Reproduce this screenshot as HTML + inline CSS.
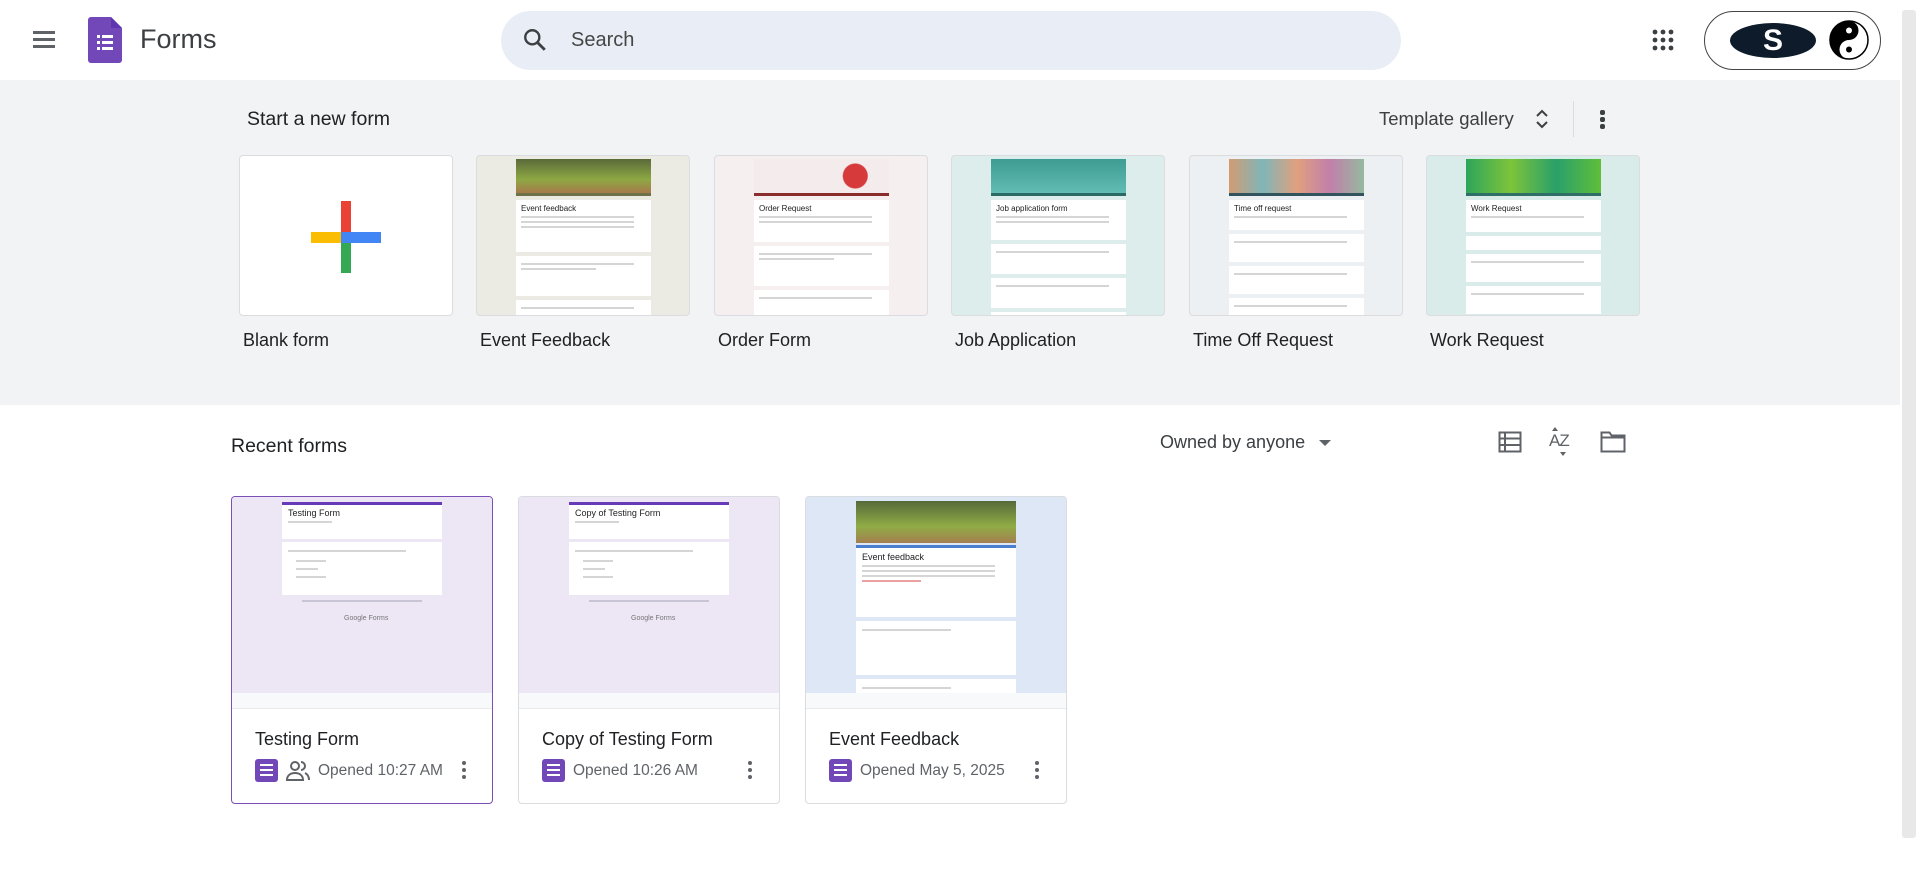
<!DOCTYPE html>
<html><head><meta charset="utf-8"><style>
*{margin:0;padding:0;box-sizing:border-box}
body{width:1920px;height:869px;overflow:hidden;background:#fff;font-family:"Liberation Sans",Arial,sans-serif;color:#202124;position:relative}
.a{position:absolute}
.grey{left:0;top:80px;width:1900px;height:325px;background:#f1f3f4}
.tc{position:absolute;top:155px;width:214px;height:161px;border:1px solid #dadce0;border-radius:4px;overflow:hidden}
.tc .col{position:absolute;left:39px;width:135px;top:3px;bottom:0}
.tc .img{height:34px}
.tc .bar{height:3px}
.tc .p{background:#fff;margin-top:4px;padding:4px 5px}
.tc .p:first-of-type{margin-top:0}
.ln{height:2px;background:#d5d5d5;margin:3px 0;width:90%}
.tl{position:absolute;top:330px;font-size:18px;color:#202124}
.rc{position:absolute;top:496px;width:262px;height:308px;border:1px solid #dadce0;border-radius:4px;overflow:hidden;background:#fff}
.rc .pv{position:absolute;left:0;top:0;right:0;height:196px}
.rc .ft{position:absolute;left:0;right:0;top:196px;height:16px;background:#f8f9fa;border-bottom:1px solid #e8eaed}
.rc .t{position:absolute;left:23px;top:232px;font-size:18px}
.rc .m{position:absolute;left:23px;top:262px;font-size:15.5px;color:#5f6368;display:flex;align-items:center;gap:8px}
.fi{width:23px;height:23px;background:#7248b9;border-radius:3px;position:relative}
.fi i{position:absolute;left:5px;width:13px;height:2px;background:#fff}
.keb{position:absolute;width:4px;height:4px;border-radius:2px;background:#5f6368}
.pan{position:absolute;left:50px;width:160px;background:#fff}
</style></head><body>

<!-- header -->
<div class="a" style="left:33px;top:31px;width:22px;height:2.5px;background:#5f6368;box-shadow:0 7px 0 #5f6368,0 14px 0 #5f6368"></div>
<svg class="a" style="left:88px;top:17px" width="34" height="46" viewBox="0 0 34 46"><path d="M3 0H23L34 11V43a3 3 0 0 1-3 3H3a3 3 0 0 1-3-3V3a3 3 0 0 1 3-3z" fill="#7248b9"/><path d="M23 0V11H34z" fill="#5e35b1"/><g fill="#fff"><rect x="9" y="18" width="3" height="3"/><rect x="14" y="18" width="11" height="3"/><rect x="9" y="24" width="3" height="3"/><rect x="14" y="24" width="11" height="3"/><rect x="9" y="30" width="3" height="3"/><rect x="14" y="30" width="11" height="3"/></g></svg>
<div class="a" style="left:140px;top:24px;font-size:27px;color:#3c4043">Forms</div>
<div class="a" style="left:501px;top:11px;width:900px;height:59px;border-radius:30px;background:#e9eef6"></div>
<svg class="a" style="left:522px;top:27px" width="26" height="26" viewBox="0 0 24 24"><circle cx="9.5" cy="9.5" r="6.5" fill="none" stroke="#3c4043" stroke-width="2.2"/><path d="M14.5 14.5L21 21" stroke="#3c4043" stroke-width="2.6"/></svg>
<div class="a" style="left:571px;top:29px;font-size:20px;color:#444746">Search</div>
<svg class="a" style="left:1652px;top:29px" width="22" height="22" viewBox="0 0 22 22" fill="#3c4043"><circle cx="3" cy="3" r="2.4"/><circle cx="11" cy="3" r="2.4"/><circle cx="19" cy="3" r="2.4"/><circle cx="3" cy="11" r="2.4"/><circle cx="11" cy="11" r="2.4"/><circle cx="19" cy="11" r="2.4"/><circle cx="3" cy="19" r="2.4"/><circle cx="11" cy="19" r="2.4"/><circle cx="19" cy="19" r="2.4"/></svg>
<div class="a" style="left:1704px;top:11px;width:177px;height:59px;border:1.5px solid #444;border-radius:30px;background:#fff"></div>
<div class="a" style="left:1730px;top:23px;width:86px;height:35px;border-radius:50%;background:#0d1b2a;color:#fff;font-weight:bold;font-size:30px;text-align:center;line-height:35px;font-family:'Liberation Sans',sans-serif">S</div>
<svg class="a" style="left:1829px;top:20px" width="40" height="40" viewBox="0 0 40 40"><circle cx="20" cy="20" r="19" fill="#fff" stroke="#000" stroke-width="1.5"/><path d="M20 1a19 19 0 0 0 0 38a9.5 9.5 0 0 1 0-19a9.5 9.5 0 0 0 0-19z" fill="#000"/><circle cx="20" cy="10.5" r="3" fill="#fff"/><circle cx="20" cy="29.5" r="3" fill="#000"/></svg>

<!-- grey template section -->
<div class="a grey"></div>
<div class="a" style="left:1902px;top:10px;width:14px;height:828px;background:#e8e8e8;border-radius:3px"></div>
<div class="a" style="left:247px;top:108px;font-size:19.5px;color:#202124">Start a new form</div>
<div class="a" style="left:1379px;top:108px;font-size:18.5px;color:#3c4043">Template gallery</div>
<svg class="a" style="left:1533px;top:106px" width="18" height="26" viewBox="0 0 18 26"><path d="M4 10l5-5 5 5M4 16l5 5 5-5" fill="none" stroke="#3c4043" stroke-width="2"/></svg>
<div class="a" style="left:1573px;top:101px;width:1px;height:36px;background:#dadce0"></div>
<div class="keb" style="left:1600px;top:110px;width:5px;height:5px;background:#3c4043"></div>
<div class="keb" style="left:1600px;top:117px;width:5px;height:5px;background:#3c4043"></div>
<div class="keb" style="left:1600px;top:124px;width:5px;height:5px;background:#3c4043"></div>

<div class="tc" style="left:239px;background:#fff">
<div class="a" style="left:101px;top:45px;width:10px;height:31px;background:#ea4335"></div>
<div class="a" style="left:71px;top:76px;width:30px;height:11px;background:#fbbc04"></div>
<div class="a" style="left:101px;top:76px;width:40px;height:11px;background:#4285f4"></div>
<div class="a" style="left:101px;top:87px;width:10px;height:30px;background:#34a853"></div>
</div>
<div class="tl" style="left:243px">Blank form</div>

<div class="tc" style="left:476px;background:#ecebe3"><div class="col"><div class="img" style="background:linear-gradient(180deg,#5b6a3a,#8da843 60%,#a77a4b)"></div><div class="bar" style="background:#6d7248"></div><div class="p" style="height:52px"><div style="font-size:8px">Event feedback</div><div class="ln"></div><div class="ln"></div><div class="ln"></div></div><div class="p" style="height:40px"><div class="ln"></div><div class="ln" style="width:60%"></div></div><div class="p" style="height:30px"><div class="ln"></div></div></div></div>
<div class="tl" style="left:480px">Event Feedback</div>

<div class="tc" style="left:714px;background:#f6efef"><div class="col"><div class="img" style="background:radial-gradient(circle at 75% 50%,#d63a3a 0 12px,transparent 13px),#f4ecec"></div><div class="bar" style="background:#8b2d2d"></div><div class="p" style="height:42px"><div style="font-size:8px">Order Request</div><div class="ln"></div><div class="ln"></div></div><div class="p" style="height:40px"><div class="ln"></div><div class="ln" style="width:60%"></div></div><div class="p" style="height:30px"><div class="ln"></div></div></div></div>
<div class="tl" style="left:718px">Order Form</div>

<div class="tc" style="left:951px;background:#dcedeb"><div class="col"><div class="img" style="background:linear-gradient(180deg,#3d9c93,#62bcb3)"></div><div class="bar" style="background:#2a6b66"></div><div class="p" style="height:40px"><div style="font-size:8px">Job application form</div><div class="ln"></div><div class="ln"></div></div><div class="p" style="height:30px"><div class="ln"></div></div><div class="p" style="height:30px"><div class="ln"></div></div><div class="p" style="height:20px"></div></div></div>
<div class="tl" style="left:955px">Job Application</div>

<div class="tc" style="left:1189px;background:#edf0f2"><div class="col"><div class="img" style="background:linear-gradient(90deg,#d39b73,#7fb6b8,#e0a07e,#c27faa,#95b9a0)"></div><div class="bar" style="background:#31545e"></div><div class="p" style="height:30px"><div style="font-size:8px">Time off request</div><div class="ln"></div></div><div class="p" style="height:28px"><div class="ln"></div></div><div class="p" style="height:28px"><div class="ln"></div></div><div class="p" style="height:28px"><div class="ln"></div></div></div></div>
<div class="tl" style="left:1193px">Time Off Request</div>

<div class="tc" style="left:1426px;background:#d9ecea"><div class="col"><div class="img" style="background:linear-gradient(90deg,#2da55a,#7dc43a,#2aa06a,#5fbf3a)"></div><div class="bar" style="background:#2f6f68"></div><div class="p" style="height:32px"><div style="font-size:8px">Work Request</div><div class="ln"></div></div><div class="p" style="height:14px"></div><div class="p" style="height:28px"><div class="ln"></div></div><div class="p" style="height:28px"><div class="ln"></div></div></div></div>
<div class="tl" style="left:1430px">Work Request</div>

<!-- recent -->
<div class="a" style="left:231px;top:435px;font-size:19.5px">Recent forms</div>
<div class="a" style="left:1160px;top:432px;font-size:18px;color:#3c4043">Owned by anyone</div>
<div class="a" style="left:1319px;top:440px;border-left:6px solid transparent;border-right:6px solid transparent;border-top:6px solid #5f6368"></div>
<svg class="a" style="left:1498px;top:431px" width="24" height="22" viewBox="0 0 24 22"><rect x="1.5" y="1.5" width="21" height="19" fill="none" stroke="#5f6368" stroke-width="2"/><path d="M1.5 7.5h21M1.5 14h21M7 1.5v19" stroke="#5f6368" stroke-width="2"/></svg>
<div class="a" style="left:1549px;top:431px;font-size:17px;color:#5f6368;letter-spacing:-1px">AZ</div>
<div class="a" style="left:1552px;top:427px;border-left:3px solid transparent;border-right:3px solid transparent;border-bottom:4px solid #5f6368"></div>
<div class="a" style="left:1560px;top:452px;border-left:3px solid transparent;border-right:3px solid transparent;border-top:4px solid #5f6368"></div>
<svg class="a" style="left:1600px;top:431px" width="26" height="22" viewBox="0 0 26 22"><path d="M1.5 20.5V1.5h8l2 3h13v16z" fill="none" stroke="#5f6368" stroke-width="2"/><path d="M1.5 6.5h23" stroke="#5f6368" stroke-width="2"/></svg>

<!-- card 1 -->
<div class="rc" style="left:231px;border:1.5px solid #7b4fb5">
<div class="pv" style="background:#ece6f5"><div class="pan" style="top:5px;height:37px;border-top:3px solid #673ab7;padding:3px 6px;font-size:9px">Testing Form<div class="ln" style="width:30%"></div></div><div class="pan" style="top:45px;height:53px;padding:5px 6px"><div class="ln" style="width:80%"></div><div class="ln" style="width:20%;margin-left:8px;margin-top:8px"></div><div class="ln" style="width:15%;margin-left:8px;margin-top:6px"></div><div class="ln" style="width:20%;margin-left:8px;margin-top:6px"></div></div><div class="a" style="left:70px;top:103px;width:120px;height:2px;background:#c9c3d6"></div><div class="a" style="left:112px;top:118px;font-size:7px;color:#777">Google Forms</div></div><div class="ft"></div>
<div class="t">Testing Form</div>
<div class="m"><div class="fi"><i style="top:5px"></i><i style="top:10px"></i><i style="top:15px"></i></div><svg width="24" height="22" viewBox="0 0 24 22"><circle cx="9" cy="6" r="4" fill="none" stroke="#5f6368" stroke-width="2"/><path d="M1 20c0-5 4-7 8-7s8 2 8 7z" fill="none" stroke="#5f6368" stroke-width="2"/><path d="M15 2a4 4 0 0 1 0 8M19 13c2 1 4 3 4 7" fill="none" stroke="#5f6368" stroke-width="2"/></svg><span>Opened 10:27 AM</span></div>
<div class="keb" style="left:230px;top:264px"></div><div class="keb" style="left:230px;top:271px"></div><div class="keb" style="left:230px;top:278px"></div>
</div>

<!-- card 2 -->
<div class="rc" style="left:518px">
<div class="pv" style="background:#ece6f5"><div class="pan" style="top:5px;height:37px;border-top:3px solid #673ab7;padding:3px 6px;font-size:9px">Copy of Testing Form<div class="ln" style="width:30%"></div></div><div class="pan" style="top:45px;height:53px;padding:5px 6px"><div class="ln" style="width:80%"></div><div class="ln" style="width:20%;margin-left:8px;margin-top:8px"></div><div class="ln" style="width:15%;margin-left:8px;margin-top:6px"></div><div class="ln" style="width:20%;margin-left:8px;margin-top:6px"></div></div><div class="a" style="left:70px;top:103px;width:120px;height:2px;background:#c9c3d6"></div><div class="a" style="left:112px;top:118px;font-size:7px;color:#777">Google Forms</div></div><div class="ft"></div>
<div class="t">Copy of Testing Form</div>
<div class="m"><div class="fi"><i style="top:5px"></i><i style="top:10px"></i><i style="top:15px"></i></div><span>Opened 10:26 AM</span></div>
<div class="keb" style="left:229px;top:264px"></div><div class="keb" style="left:229px;top:271px"></div><div class="keb" style="left:229px;top:278px"></div>
</div>

<!-- card 3 -->
<div class="rc" style="left:805px">
<div class="pv" style="background:#dde7f6"><div class="pan" style="top:4px;height:42px;background:linear-gradient(180deg,#56693a,#8fac45 60%,#a57f50)"></div><div class="pan" style="top:48px;height:72px;border-top:3px solid #4a7fd0;padding:4px 6px;font-size:9px">Event feedback<div class="ln"></div><div class="ln"></div><div class="ln"></div><div class="ln" style="width:40%;background:#e8a0a0"></div></div><div class="pan" style="top:124px;height:54px;padding:5px 6px"><div class="ln" style="width:60%"></div></div><div class="pan" style="top:182px;height:20px;padding:5px 6px"><div class="ln" style="width:60%"></div></div></div><div class="ft"></div>
<div class="t">Event Feedback</div>
<div class="m"><div class="fi"><i style="top:5px"></i><i style="top:10px"></i><i style="top:15px"></i></div><span>Opened May 5, 2025</span></div>
<div class="keb" style="left:229px;top:264px"></div><div class="keb" style="left:229px;top:271px"></div><div class="keb" style="left:229px;top:278px"></div>
</div>
</body></html>
